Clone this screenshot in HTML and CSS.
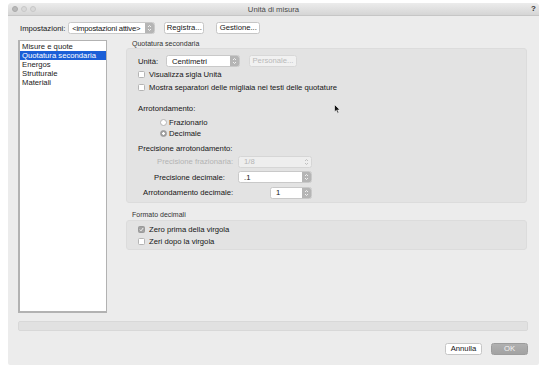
FILE: index.html
```html
<!DOCTYPE html>
<html lang="it">
<head>
    <meta charset="UTF-8">
    <title>Unità di misura</title>
    <link rel="stylesheet" href="styles.css">
</head>
<body>
    <div class="window">
        <div class="titlebar">
            <div class="lights">
                <span class="light light-close"></span>
                <span class="light"></span>
                <span class="light"></span>
            </div>
            <div class="title">Unità di misura</div>
            <div class="help">?</div>
        </div>

        <div class="content">
            <div class="topbar">
                <span class="top-label">Impostazioni:</span>
                <div class="popup popup-settings">
                    <span class="popup-value">&lt;impostazioni attive&gt;</span>
                    <span class="stepper"><svg width="5" height="8" viewBox="0 0 5 8"><path d="M1 3 L2.5 1.5 L4 3 M1 5 L2.5 6.5 L4 5" fill="none" stroke="#fff" stroke-width="0.8"/></svg></span>
                </div>
                <button class="btn btn-registra">Registra...</button>
                <button class="btn btn-gestione">Gestione...</button>
            </div>

            <div class="main">
                <ul class="list">
                    <li>Misure e quote</li>
                    <li class="selected">Quotatura secondaria</li>
                    <li>Energos</li>
                    <li>Strutturale</li>
                    <li>Materiali</li>
                </ul>

                <div class="panes">
                    <div class="group-title">Quotatura secondaria</div>
                    <div class="group group-main">
                        <div class="row unit-row">
                            <span class="label">Unità:</span>
                            <div class="popup popup-unit">
                                <span class="popup-value">Centimetri</span>
                                <span class="stepper"><svg width="5" height="8" viewBox="0 0 5 8"><path d="M1 3 L2.5 1.5 L4 3 M1 5 L2.5 6.5 L4 5" fill="none" stroke="#fff" stroke-width="0.8"/></svg></span>
                            </div>
                            <button class="btn btn-disabled">Personale...</button>
                        </div>
                        <div class="check-row first-check"><span class="checkbox"></span>Visualizza sigla Unità</div>
                        <div class="check-row"><span class="checkbox"></span>Mostra separatori delle migliaia nei testi delle quotature</div>

                        <div class="section-label rounding-label">Arrotondamento:</div>
                        <div class="radio-row first-radio"><span class="radio"></span>Frazionario</div>
                        <div class="radio-row"><span class="radio radio-on"></span>Decimale</div>

                        <div class="section-label precision-label">Precisione arrotondamento:</div>
                        <div class="field-row">
                            <span class="field-label fl-frac disabled">Precisione frazionaria:</span>
                            <div class="popup popup-disabled popup-wide">
                                <span class="popup-value">1/8</span>
                                <span class="stepper"><svg width="5" height="8" viewBox="0 0 5 8"><path d="M1 3 L2.5 1.5 L4 3 M1 5 L2.5 6.5 L4 5" fill="none" stroke="#b4b4b4" stroke-width="0.8"/></svg></span>
                            </div>
                        </div>
                        <div class="field-row">
                            <span class="field-label fl-dec">Precisione decimale:</span>
                            <div class="popup popup-wide">
                                <span class="popup-value">.1</span>
                                <span class="stepper"><svg width="5" height="8" viewBox="0 0 5 8"><path d="M1 3 L2.5 1.5 L4 3 M1 5 L2.5 6.5 L4 5" fill="none" stroke="#fff" stroke-width="0.8"/></svg></span>
                            </div>
                        </div>
                        <div class="field-row">
                            <span class="field-label fl-round">Arrotondamento decimale:</span>
                            <div class="popup popup-small">
                                <span class="popup-value">1</span>
                                <span class="stepper"><svg width="5" height="8" viewBox="0 0 5 8"><path d="M1 3 L2.5 1.5 L4 3 M1 5 L2.5 6.5 L4 5" fill="none" stroke="#fff" stroke-width="0.8"/></svg></span>
                            </div>
                        </div>
                    </div>

                    <div class="group-title second-title">Formato decimali</div>
                    <div class="group group-format">
                        <div class="check-row"><span class="checkbox checkbox-on"><svg width="5" height="5" viewBox="0 0 5 5"><path d="M0.8 2.6 L2 3.8 L4.2 1" fill="none" stroke="#fff" stroke-width="0.9"/></svg></span>Zero prima della virgola</div>
                        <div class="check-row"><span class="checkbox"></span>Zeri dopo la virgola</div>
                    </div>
                </div>
            </div>

            <div class="statusbar"></div>

            <div class="actions">
                <button class="btn btn-cancel">Annulla</button>
                <button class="btn btn-ok">OK</button>
            </div>
        </div>

        <svg class="cursor" width="7" height="10" viewBox="0 0 7 10"><path d="M0.5 0.5 L0.5 8 L2.3 6.3 L3.6 9.2 L4.8 8.7 L3.6 5.9 L6 5.9 Z" fill="#111" stroke="#fff" stroke-width="0.6"/></svg>
    </div>
</body>
</html>
```

FILE: styles.css
```css
* {
    box-sizing: border-box;
    margin: 0;
    padding: 0;
}

body {
    background: #ffffff;
    font-family: 'Liberation Sans', Arial, sans-serif;
    font-size: 7.7px;
    color: #151515;
}

button {
    font-family: inherit;
    font-size: inherit;
    color: inherit;
}

.window {
    position: relative;
    margin: 3px 0 0 8px;
    width: 531px;
    height: 362px;
    background: #ececec;
    border-radius: 4px 4px 2px 2px;
    overflow: hidden;
}

/* title bar */
.titlebar {
    position: relative;
    height: 13px;
    display: flex;
    align-items: center;
    background: linear-gradient(#ececec, #d5d5d5);
    border-bottom: 1px solid #c6c6c6;
}

.lights {
    display: flex;
    gap: 3px;
    padding-left: 4px;
}

.light {
    width: 6px;
    height: 6px;
    border-radius: 50%;
    background: #d9d9d9;
    border: 0.5px solid #c7c7c7;
}

.light-close {
    background: #b9b9b9;
    border-color: #aaaaaa;
}

.title {
    position: absolute;
    left: 0;
    right: 0;
    text-align: center;
    color: #4b4b4b;
    font-size: 7.7px;
}

.help {
    position: absolute;
    right: 3px;
    top: 1px;
    font-size: 8px;
    font-weight: bold;
    color: #333;
}

/* content */
.content {
    padding: 0 11px 0 10px;
}

.topbar {
    display: flex;
    align-items: center;
    height: 12px;
    margin-top: 6px;
    padding-left: 2px;
}

.top-label {
    margin-right: 3px;
}

.popup {
    display: flex;
    align-items: stretch;
    height: 12px;
    background: #ffffff;
    border: 1px solid #c9c9c9;
    border-radius: 2.5px;
    overflow: hidden;
}

.popup-value {
    flex: 1;
    display: flex;
    align-items: center;
    padding-left: 5px;
    white-space: nowrap;
}

.stepper {
    width: 9px;
    flex-shrink: 0;
    display: flex;
    align-items: center;
    justify-content: center;
    background: #b5b5b5;
}

.popup-settings {
    width: 87px;
}

.popup-settings .popup-value {
    padding-left: 3px;
    letter-spacing: -0.2px;
    overflow: hidden;
}

.btn {
    height: 12px;
    background: #ffffff;
    border: 1px solid #c6c6c6;
    border-radius: 2.5px;
    padding: 0;
    line-height: 10px;
    text-align: center;
    white-space: nowrap;
}

.btn-registra {
    margin-left: 9px;
    width: 40px;
}

.btn-gestione {
    margin-left: 12px;
    width: 44px;
}

/* main area */
.main {
    display: flex;
    margin-top: 6px;
    height: 273px;
}

.list {
    list-style: none;
    width: 89px;
    height: 273px;
    background: #ffffff;
    border: 1px solid #b2b2b2;
    border-left-width: 2px;
    border-bottom-width: 2px;
    padding-top: 1px;
}

.list li {
    height: 9px;
    line-height: 9px;
    padding-left: 2px;
    color: #1a1a1a;
}

.list li.selected {
    background: #1b5fd7;
    color: #ffffff;
}

.panes {
    margin-left: 19px;
    width: 401px;
}

.group-title {
    height: 8px;
    line-height: 8px;
    padding-left: 6px;
    font-size: 7px;
    color: #333;
}

.second-title {
    height: 17px;
    line-height: 8px;
    padding-top: 8px;
}

.group {
    background: #e3e3e3;
    border: 1px solid #dcdcdc;
    border-radius: 3px;
    padding-left: 11px;
}

.group-main {
    height: 155px;
    padding-top: 6px;
}

.row {
    display: flex;
    align-items: center;
}

.label {
    width: 28px;
}

.popup-unit {
    width: 74px;
}

.btn-disabled {
    margin-left: 9px;
    width: 48px;
    color: #b9b9b9;
    border-color: #d8d8d8;
    background: #f1f1f1;
}

.check-row {
    display: flex;
    align-items: center;
    height: 13px;
}

.first-check {
    margin-top: 1px;
}

.checkbox {
    width: 7px;
    height: 7px;
    margin-right: 4px;
    background: #ffffff;
    border: 1px solid #b4b4b4;
    border-radius: 1.5px;
    display: flex;
    align-items: center;
    justify-content: center;
}

.checkbox-on {
    background: #a3a3a3;
    border-color: #9a9a9a;
}

.section-label {
    height: 11px;
    line-height: 11px;
}

.rounding-label {
    margin-top: 9px;
}

.radio-row {
    display: flex;
    align-items: center;
    height: 11px;
    padding-left: 22px;
}

.first-radio {
    margin-top: 3px;
}

.radio {
    width: 7px;
    height: 7px;
    margin-right: 2px;
    border-radius: 50%;
    background: #ffffff;
    border: 1px solid #b4b4b4;
}

.radio-on {
    background: radial-gradient(circle, #ffffff 0 1.2px, #9e9e9e 1.5px);
    border-color: #999999;
}

.precision-label {
    margin-top: 4px;
}

.field-row {
    display: flex;
    align-items: center;
    height: 15.5px;
}

.field-label {
    white-space: nowrap;
}

.fl-frac {
    margin-left: 19px;
    width: 81px;
}

.fl-dec {
    margin-left: 16px;
    width: 84px;
}

.fl-round {
    margin-left: 5px;
    width: 127px;
}

.disabled {
    color: #b3b3b3;
}

.popup-wide {
    width: 74px;
}

.popup-small {
    width: 42px;
}

.popup-disabled {
    background: #eeeeee;
    border-color: #d6d6d6;
    color: #b5b5b5;
}

.popup-disabled .stepper {
    background: transparent;
}

.group-format {
    height: 30px;
    padding-top: 2px;
}

.group-format .check-row {
    height: 12px;
}

/* bottom */
.statusbar {
    margin-top: 8px;
    height: 10px;
    background: #e1e1e1;
    border: 1px solid #d8d8d8;
    border-radius: 2px;
}

.actions {
    display: flex;
    justify-content: flex-end;
    gap: 9px;
    margin-top: 12px;
}

.actions .btn {
    width: 37px;
}

.btn-ok {
    background: linear-gradient(#b0b0b0, #a2a2a2);
    border-color: #9c9c9c;
    color: #f4f4f4;
}

.cursor {
    position: absolute;
    left: 326px;
    top: 101px;
}
```
